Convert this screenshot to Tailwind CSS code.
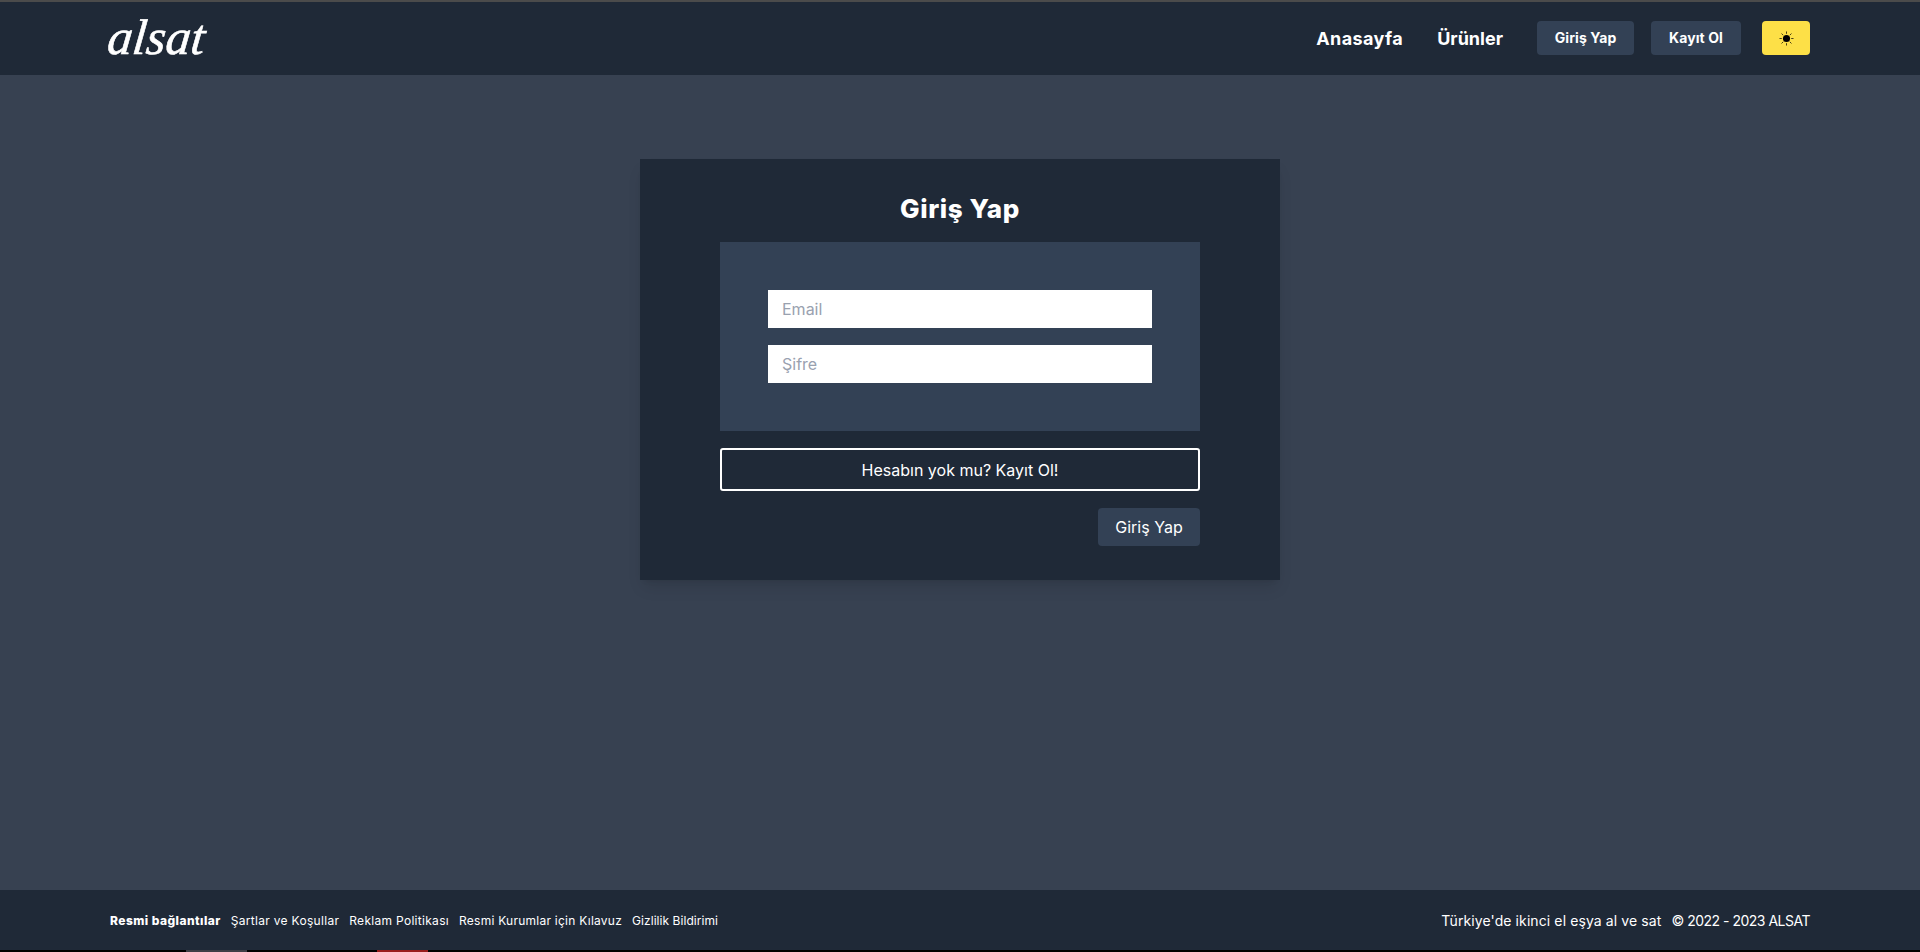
<!DOCTYPE html>
<html lang="tr">
<head>
<meta charset="utf-8">
<title>alsat</title>
<script src="https://cdn.jsdelivr.net/npm/@tailwindcss/browser@4"></script>
</head>
<body class="h-[952px] overflow-hidden bg-black font-['Inter','Noto_Sans',sans-serif] text-white">
<div class="flex h-[950px] flex-col">
  <header class="flex h-[75px] items-center justify-between border-t-2 border-[#4b4b4b] bg-[#1f2937] pl-[108px] pr-[110px]">
    <a class="mb-[3px] -skew-x-6 font-['Liberation_Serif',serif] text-[50px] italic leading-none [-webkit-text-stroke:0.6px_white]">alsat</a>
    <nav class="mb-px flex items-center">
      <a class="text-[18px] font-bold tracking-[0.4px]">Anasayfa</a>
      <a class="ml-[34px] text-[18px] font-bold">Ürünler</a>
      <a class="ml-[34px] flex h-[34px] w-[97px] items-center justify-center rounded bg-[#334155] text-sm font-bold tracking-[0.1px]">Giriş Yap</a>
      <a class="ml-[17px] flex h-[34px] w-[90px] items-center justify-center rounded bg-[#334155] text-sm font-bold tracking-[0.1px]">Kayıt Ol</a>
      <button class="ml-[21px] flex h-[34px] w-[48px] items-center justify-center rounded bg-[#fde047]">
        <svg width="15" height="15" viewBox="0 0 16 16" stroke="#000" stroke-width="1"><circle cx="8" cy="8" r="3.8" fill="#000" stroke="none"/><path d="M8 0.5v2.5M8 13v2.5M0.5 8h2.5M13 8h2.5M2.7 2.7l1.8 1.8M11.5 11.5l1.8 1.8M2.7 13.3l1.8-1.8M11.5 4.5l1.8-1.8" opacity=".75"/></svg>
      </button>
    </nav>
  </header>
  <main class="flex flex-1 items-start justify-center bg-[#374151] pt-[84px]">
    <section class="w-[640px] bg-[#1f2937] px-[80px] pb-[34px] pt-[32px] shadow-lg">
      <h1 class="text-center text-[26px] font-extrabold leading-[36px] tracking-[0.6px]">Giriş Yap</h1>
      <form class="mt-[15px] flex flex-col gap-[17px] bg-[#334155] p-[48px]">
        <input class="h-[38px] w-full bg-white px-[14px] text-base text-gray-800 outline-none placeholder:text-gray-400" placeholder="Email">
        <input class="h-[38px] w-full bg-white px-[14px] text-base text-gray-800 outline-none placeholder:text-gray-400" placeholder="Şifre">
      </form>
      <a class="mt-[17px] flex h-[43px] items-center justify-center rounded-[3px] border-2 border-white text-base">Hesabın yok mu? Kayıt Ol!</a>
      <div class="mt-[17px] flex justify-end">
        <button class="h-[38px] w-[102px] rounded bg-[#334155] text-base">Giriş Yap</button>
      </div>
    </section>
  </main>
  <footer class="flex h-[60px] items-center justify-between bg-[#1f2937] pl-[110px] pr-[110px] pt-[2px]">
    <div class="flex items-center gap-[10px] text-xs">
      <b class="font-extrabold tracking-[0.45px]">Resmi bağlantılar</b>
      <a class="tracking-[0.3px]">Şartlar ve Koşullar</a>
      <a class="tracking-[0.3px]">Reklam Politikası</a>
      <a class="tracking-[0.25px]">Resmi Kurumlar için Kılavuz</a>
      <a class="tracking-[0.05px]">Gizlilik Bildirimi</a>
    </div>
    <div class="flex gap-[10px] text-sm">
      <span class="tracking-[0.1px]">Türkiye'de ikinci el eşya al ve sat</span>
      <span class="tracking-[-0.5px]">© 2022 - 2023 ALSAT</span>
    </div>
  </footer>
</div>
<div class="flex h-[2px] bg-black">
  <div class="ml-[186px] w-[61px] bg-[#3f3f46]"></div>
  <div class="ml-[130px] w-[51px] bg-[#991b1b]"></div>
</div>
</body>
</html>
